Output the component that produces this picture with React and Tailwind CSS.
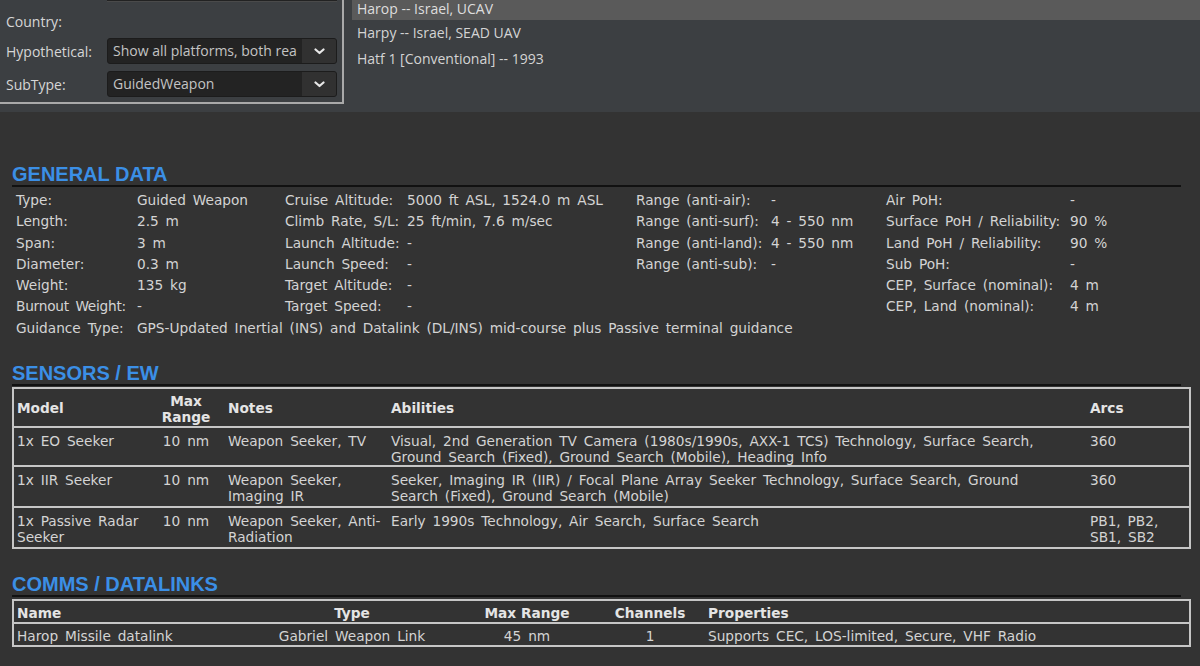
import React from "react";

const generalRows = [
  ["Type:", "Guided Weapon", "Cruise Altitude:", "5000 ft ASL, 1524.0 m ASL", "Range (anti-air):", "-", "Air PoH:", "-"],
  ["Length:", "2.5 m", "Climb Rate, S/L:", "25 ft/min, 7.6 m/sec", "Range (anti-surf):", "4 - 550 nm", "Surface PoH / Reliability:", "90 %"],
  ["Span:", "3 m", "Launch Altitude:", "-", "Range (anti-land):", "4 - 550 nm", "Land PoH / Reliability:", "90 %"],
  ["Diameter:", "0.3 m", "Launch Speed:", "-", "Range (anti-sub):", "-", "Sub PoH:", "-"],
  ["Weight:", "135 kg", "Target Altitude:", "-", "", "", "CEP, Surface (nominal):", "4 m"],
  ["Burnout Weight:", "-", "Target Speed:", "-", "", "", "CEP, Land (nominal):", "4 m"],
];

const sensors = [
  {
    model: ["1x EO Seeker"],
    range: "10 nm",
    notes: ["Weapon Seeker, TV"],
    abilities: [
      "Visual, 2nd Generation TV Camera (1980s/1990s, AXX-1 TCS) Technology, Surface Search,",
      "Ground Search (Fixed), Ground Search (Mobile), Heading Info",
    ],
    arcs: ["360"],
  },
  {
    model: ["1x IIR Seeker"],
    range: "10 nm",
    notes: ["Weapon Seeker,", "Imaging IR"],
    abilities: [
      "Seeker, Imaging IR (IIR) / Focal Plane Array Seeker Technology, Surface Search, Ground",
      "Search (Fixed), Ground Search (Mobile)",
    ],
    arcs: ["360"],
  },
  {
    model: ["1x Passive Radar", "Seeker"],
    range: "10 nm",
    notes: ["Weapon Seeker, Anti-", "Radiation"],
    abilities: ["Early 1990s Technology, Air Search, Surface Search"],
    arcs: ["PB1, PB2,", "SB1, SB2"],
  },
];

const Lines = ({ items }) => items.map((t, i) => <div key={i}>{t}</div>);

const Chevron = () => (
  <svg width="11" height="7" viewBox="0 0 11 7" fill="none">
    <polyline points="1.5,1.5 5.5,5 9.5,1.5" stroke="#e8e8e8" strokeWidth="2.2" strokeLinecap="round" strokeLinejoin="round" />
  </svg>
);

const Dropdown = ({ value }) => (
  <div className="flex h-[26px] w-[230px] overflow-hidden rounded-[3px] border border-[#1c1c1c] bg-[#232323]">
    <div className="flex-1 overflow-hidden whitespace-nowrap pl-[5px] leading-[24px] text-[#c4c4c4]">{value}</div>
    <div className="flex w-[34px] items-center justify-center bg-[#313131]">
      <Chevron />
    </div>
  </div>
);

const Heading = ({ children }) => (
  <div className="w-[1169px] border-b-2 border-[#111] font-['Liberation_Sans',Arial,sans-serif] text-[20px] font-bold leading-[21px] text-[#3b8fe6] [word-spacing:0px]">
    {children}
  </div>
);

const App = () => {
  return (
    <div className="h-[666px] w-[1200px] overflow-hidden bg-[#333333] font-['DejaVu_Sans',Verdana,sans-serif] text-[13.7px] text-[#d4d4d4]">
      {/* filter panel + result list */}
      <div className="flex h-[112px] bg-[#3c3f42] font-['Open_Sans',sans-serif] text-[14px]">
        <div className="h-[104px] w-[344px] border-r-2 border-b-2 border-[#a9a9a9]">
          <div className="ml-[107px] h-[2px] w-[230px] border-b border-[#4a4a4a] bg-[#222]"></div>
          <div className="flex h-[34px] items-center pl-[6px] pt-[4px] text-[#d6d6d6]">Country:</div>
          <div className="mt-[2px] flex items-center">
            <div className="w-[107px] pl-[6px] text-[#d6d6d6]">Hypothetical:</div>
            <Dropdown value="Show all platforms, both rea" />
          </div>
          <div className="mt-[7px] flex items-center">
            <div className="w-[107px] pl-[6px] text-[#d6d6d6]">SubType:</div>
            <Dropdown value="GuidedWeapon" />
          </div>
        </div>
        <div className="ml-[8px] flex-1 text-[#d4d4d4]">
          <div className="h-[20px] bg-[#5a5a5a] pl-[5px] leading-[17px] text-[#dedede]">Harop -- Israel, UCAV</div>
          <div className="h-[26px] pl-[5px] leading-[26px]">Harpy -- Israel, SEAD UAV</div>
          <div className="h-[26px] pl-[5px] leading-[26px]">Hatf 1 [Conventional] -- 1993</div>
        </div>
      </div>

      <div className="px-[12px] [word-spacing:2.5px]">
        {/* general data */}
        <div className="mt-[52px]">
          <Heading>GENERAL DATA</Heading>
        </div>
        <div className="mt-[3px] grid grid-cols-[121px_148px_122px_229px_135px_115px_184px_1fr] pl-[4px] leading-[21.3px] whitespace-nowrap">
          {generalRows.map((row, r) =>
            row.map((cell, c) => (
              <div key={r + "-" + c} className={cell === "Burnout Weight:" ? "tracking-[-0.25px]" : ""}>
                {cell}
              </div>
            ))
          )}
          <div>Guidance Type:</div>
          <div className="col-span-7">GPS-Updated Inertial (INS) and Datalink (DL/INS) mid-course plus Passive terminal guidance</div>
        </div>

        {/* sensors */}
        <div className="mt-[24px]">
          <Heading>SENSORS / EW</Heading>
        </div>
        <div className="mt-[1px] w-[1179px] border-2 border-[#c6c6c6] whitespace-nowrap leading-[15.6px]">
          <div className="flex h-[37px] items-center pt-[2px] font-bold text-[#e4e4e4] [word-spacing:0px]">
            <div className="w-[146px] pl-[3px]">Model</div>
            <div className="w-[52px] text-center leading-[16px]">Max<br />Range</div>
            <div className="w-[175px] pl-[16px]">Notes</div>
            <div className="w-[699px] pl-[4px]">Abilities</div>
            <div className="flex-1 pl-[4px]">Arcs</div>
          </div>
          {sensors.map((s, i) => (
            <div key={i} className={"flex border-t-2 border-[#c6c6c6] pt-[6px] " + (i === 0 ? "h-[39px]" : "h-[41px]")}>
              <div className="w-[146px] pl-[3px]"><Lines items={s.model} /></div>
              <div className="w-[52px] text-center">{s.range}</div>
              <div className="w-[175px] pl-[16px]"><Lines items={s.notes} /></div>
              <div className="w-[699px] pl-[4px]"><Lines items={s.abilities} /></div>
              <div className="flex-1 pl-[4px]"><Lines items={s.arcs} /></div>
            </div>
          ))}
        </div>

        {/* comms */}
        <div className="mt-[25px]">
          <Heading>COMMS / DATALINKS</Heading>
        </div>
        <div className="mt-[2px] w-[1179px] border-2 border-[#c6c6c6] whitespace-nowrap">
          <div className="flex h-[21px] items-center pt-[3px] font-bold text-[#e4e4e4] [word-spacing:0px]">
            <div className="w-[236px] pl-[3px]">Name</div>
            <div className="w-[204px] text-center">Type</div>
            <div className="w-[146px] text-center">Max Range</div>
            <div className="w-[100px] text-center">Channels</div>
            <div className="flex-1 pl-[8px]">Properties</div>
          </div>
          <div className="flex h-[23px] items-center border-t-2 border-[#c6c6c6] pt-[3px]">
            <div className="w-[236px] pl-[3px]">Harop Missile datalink</div>
            <div className="w-[204px] text-center">Gabriel Weapon Link</div>
            <div className="w-[146px] text-center">45 nm</div>
            <div className="w-[100px] text-center">1</div>
            <div className="flex-1 pl-[8px]">Supports CEC, LOS-limited, Secure, VHF Radio</div>
          </div>
        </div>
      </div>
    </div>
  );
};

export default App;
